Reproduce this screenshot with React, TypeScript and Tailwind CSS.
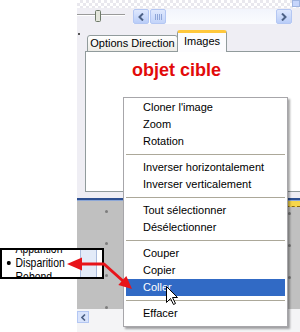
import React from "react";

const menuItems: (string | null)[] = [
  "Cloner l'image",
  "Zoom",
  "Rotation",
  null,
  "Inverser horizontalement",
  "Inverser verticalement",
  null,
  "Tout sélectionner",
  "Désélectionner",
  null,
  "Couper",
  "Copier",
  "Coller",
  null,
  "Effacer",
];

function ArrowBtn({ dir }: { dir: "left" | "right" }) {
  return (
    <div className="w-[16px] h-[15px] rounded-[2px] border border-[#b4c7f3] bg-gradient-to-b from-[#dfe8fd] to-[#b9cdf8] flex items-center justify-center">
      <svg width="6" height="8" viewBox="0 0 6 8">
        {dir === "left" ? (
          <path d="M5 0.5 L1.5 4 L5 7.5" fill="none" stroke="#4d6185" strokeWidth="2" />
        ) : (
          <path d="M1 0.5 L4.5 4 L1 7.5" fill="none" stroke="#4d6185" strokeWidth="2" />
        )}
      </svg>
    </div>
  );
}

export default function App() {
  return (
    <div className="relative w-[300px] h-[332px] overflow-hidden bg-white font-['Liberation_Sans',Arial,sans-serif] text-black">
      <div className="ml-[77px] h-full flex flex-col bg-[#efeef4]">
        {/* checker strip */}
        <div className="h-[8px] flex justify-end bg-[image:repeating-conic-gradient(#e9e8ee_0%_25%,#ffffff_0%_50%)] bg-[length:6px_6px]">
          <div className="w-[8px] h-[7px] border border-[#9fb4e0] bg-[#c6d5fb]" />
        </div>

        {/* slider + horizontal scrollbar */}
        <div className="h-[17px] flex items-center">
          <svg width="56" height="17" viewBox="0 0 56 17">
            <line x1="0" y1="6.5" x2="48" y2="6.5" stroke="#9a9a9a" strokeWidth="1" />
            <line x1="0" y1="7.5" x2="48" y2="7.5" stroke="#ffffff" strokeWidth="1" />
            <rect x="18.5" y="2.5" width="5" height="11" rx="1" fill="#e4e6dc" stroke="#6f7a6a" />
          </svg>
          <div className="w-[159px] h-[15px] flex bg-gradient-to-b from-[#f2f5fc] to-[#fbfcfe]">
            <ArrowBtn dir="left" />
            <div className="w-[16px] h-[15px] ml-px rounded-[2px] border border-[#b4c7f3] bg-gradient-to-b from-[#dfe8fd] to-[#c3d4f9] flex items-center justify-center gap-[1px]">
              <div className="w-px h-[6px] bg-[#8fa6d8]" />
              <div className="w-px h-[6px] bg-[#8fa6d8]" />
              <div className="w-px h-[6px] bg-[#8fa6d8]" />
              <div className="w-px h-[6px] bg-[#8fa6d8]" />
            </div>
            <div className="flex-1" />
            <ArrowBtn dir="right" />
          </div>
        </div>

        {/* tabs */}
        <div className="relative z-10 h-[27px] -mb-px flex items-end pl-[10px]">
          <div className="w-[91px] h-[17px] rounded-t-[3px] border border-[#919b9c] bg-gradient-to-b from-white to-[#ecebe6] text-[11px] leading-[15px] text-center">
            Options Direction
          </div>
          <div className="w-[50px] h-[22px] -ml-px rounded-t-[3px] border-x border-[#919b9c] border-t-[3px] border-t-[#ffc83c] bg-[#fcfcfe] text-[11px] leading-[16px] text-center">
            Images
          </div>
        </div>

        {/* panel */}
        <div className="ml-[8px] h-[141px] border-y border-l border-[#919b9c] bg-white pl-[46px] pt-[7px]">
          <div className="text-[18px] font-bold leading-[22px] text-[#e20a0a]">objet cible</div>
        </div>

        <div className="h-[6px]" />
        <div className="h-[2px] bg-[#2d4f90]" />
        <div className="h-px bg-[#8da7d6]" />

        {/* timeline */}
        <div className="h-[108px] bg-[#c0c0c0] flex">
          <div className="pl-[28px] pt-[9px] flex flex-col gap-[29px]">
            <div className="w-[3px] h-[3px] rounded-full bg-[#7d7d7d]" />
            <div className="w-[3px] h-[3px] rounded-full bg-[#7d7d7d]" />
            <div className="w-[3px] h-[3px] rounded-full bg-[#7d7d7d]" />
            <div className="w-[3px] h-[3px] rounded-full bg-[#7d7d7d]" />
          </div>
          <div className="ml-auto w-[40px] flex flex-col">
            <div className="h-[6px] bg-[#f6d64a] border-b border-dashed border-[#8a6a10]" />
            <div className="pt-[5px] pl-[28px] flex flex-col gap-[29px]">
              <div className="w-[3px] h-[3px] rounded-full bg-[#7d7d7d]" />
              <div className="w-[3px] h-[3px] rounded-full bg-[#7d7d7d]" />
              <div className="w-[3px] h-[3px] rounded-full bg-[#7d7d7d]" />
            </div>
          </div>
        </div>

        {/* bottom strip */}
        <div className="flex-1 bg-[#f4f4f6] pt-[2px]">
          <div className="w-[12px] h-[12px] border border-[#b4c7f3] bg-[#d9e4fc] flex items-center justify-center">
            <svg width="5" height="7" viewBox="0 0 5 7">
              <path d="M4 0.5 L1 3.5 L4 6.5" fill="none" stroke="#4d6185" strokeWidth="1.6" />
            </svg>
          </div>
        </div>
      </div>

      <div className="absolute left-[78px] top-[33px] w-[2px] h-[2px] bg-[#555]" />

      {/* context menu */}
      <div className="absolute left-[123px] top-[97px] w-[165px] border border-[#a7a6aa] bg-white px-[2px] pt-px pb-[4px] shadow-[2px_2px_2px_rgba(0,0,0,0.35)] text-[11px]">
        {menuItems.map((item, i) =>
          item === null ? (
            <div key={i} className="h-[9px] flex items-center">
              <div className="w-full h-px bg-[#aca899]" />
            </div>
          ) : (
            <div
              key={i}
              className={`h-[17px] leading-[17px] pl-[17px] ${
                item === "Coller" ? "bg-[#316ac5] text-white" : ""
              }`}
            >
              {item}
            </div>
          )
        )}
      </div>

      {/* callout */}
      <div className="absolute left-0 top-[248px] w-[104px] h-[31px] border-2 border-black bg-white overflow-hidden flex">
        <div className="flex-1 -mt-[8px] text-[13px] leading-[14px] origin-left scale-x-[0.8]">
          <div className="pl-[17px]">Apparition</div>
          <div className="flex items-center">
            <div className="w-[5px] h-[4px] rounded-full bg-black ml-[6px] mr-[6px]" />
            <span>Disparition</span>
          </div>
          <div className="pl-[17px]">Rebond</div>
        </div>
        <div className="w-[18px] mr-[5px] border-x border-[#a9bbdc] bg-[#e3ebf8]" />
      </div>

      {/* red arrow */}
      <svg className="absolute left-0 top-0 pointer-events-none" width="300" height="332" viewBox="0 0 300 332">
        <polyline points="80,264 104,264 123,281" fill="none" stroke="#e8141a" strokeWidth="3" strokeLinejoin="round" />
        <polygon points="67,264 82,257.5 82,270.5" fill="#e8141a" />
        <polygon points="132,289 118.3,284.9 126.3,275.9" fill="#e8141a" />
      </svg>

      {/* mouse cursor */}
      <svg className="absolute left-[166px] top-[286px] pointer-events-none" width="13" height="20" viewBox="0 0 13 20">
        <path d="M0.5 0.5 L0.5 16.5 L4.5 12.5 L7.5 18.5 L9.5 17.5 L6.5 11.5 L11.5 11.5 Z" fill="white" stroke="black" strokeWidth="1" />
      </svg>
    </div>
  );
}
